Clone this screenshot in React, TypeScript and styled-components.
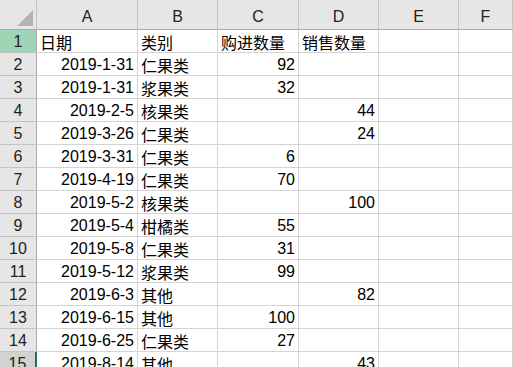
import React from 'react';
import styled, { createGlobalStyle } from 'styled-components';

const GlobalStyle = createGlobalStyle`
  html, body {
    margin: 0;
    padding: 0;
    background: #ffffff;
    overflow: hidden;
  }
`

const Sheet = styled.div`
  display: grid;
  grid-template-columns: 37px 101px 80px 81px 80px 80px 1fr;
  grid-auto-rows: 23px;
  grid-template-rows: 30px;
  width: 513px;
  height: 367px;
  overflow: hidden;
  font-family: "Liberation Sans", "Noto Sans CJK SC", sans-serif;
  font-size: 16px;
  color: #000;
`

const Corner = styled.div`
  background: #e6e6e6;
  border-right: 1px solid #c4c4c4;
  border-bottom: 1px solid #ababab;
  box-sizing: border-box;
  display: flex;
  align-items: flex-end;
  justify-content: flex-end;
  padding: 0 3px 3px 0;
`

const ColHead = styled.div`
  background: #e6e6e6;
  border-right: 1px solid #c4c4c4;
  border-bottom: 1px solid #ababab;
  box-sizing: border-box;
  display: flex;
  align-items: center;
  justify-content: center;
  color: #222;
  padding-top: 4px;
`

const RowHead = styled.div<{ $state?: 'sel' | 'active' }>`
  background: ${p => p.$state === 'sel' ? '#9fd5b7' : p.$state === 'active' ? '#d2d2d2' : '#e6e6e6'};
  border-right: ${p => p.$state === 'active' ? '2px solid #217346' : '1px solid #ababab'};
  border-bottom: 1px solid #c4c4c4;
  box-sizing: border-box;
  display: flex;
  align-items: center;
  justify-content: center;
  color: #222;
  padding-top: 2px;
`

const Cell = styled.div<{ $right?: boolean }>`
  border-right: 1px solid #d4d4d4;
  border-bottom: 1px solid #d4d4d4;
  box-sizing: border-box;
  display: flex;
  align-items: center;
  justify-content: ${p => p.$right ? 'flex-end' : 'flex-start'};
  padding: 2px 3px 0;
  white-space: nowrap;
  overflow: hidden;
`

const cols = ['A', 'B', 'C', 'D', 'E', 'F'];

const rows: [string, string, string, string][] = [
  ['2019-1-31', '仁果类', '92', ''],
  ['2019-1-31', '浆果类', '32', ''],
  ['2019-2-5', '核果类', '', '44'],
  ['2019-3-26', '仁果类', '', '24'],
  ['2019-3-31', '仁果类', '6', ''],
  ['2019-4-19', '仁果类', '70', ''],
  ['2019-5-2', '核果类', '', '100'],
  ['2019-5-4', '柑橘类', '55', ''],
  ['2019-5-8', '仁果类', '31', ''],
  ['2019-5-12', '浆果类', '99', ''],
  ['2019-6-3', '其他', '', '82'],
  ['2019-6-15', '其他', '100', ''],
  ['2019-6-25', '仁果类', '27', ''],
  ['2019-8-14', '其他', '', '43'],
];

export default function App() {
  return (
    <>
      <GlobalStyle />
      <Sheet>
        <Corner>
          <svg width="16" height="16" viewBox="0 0 16 16">
            <polygon points="16,0 16,16 0,16" fill="#b4b4b4" />
          </svg>
        </Corner>
        {cols.map(c => <ColHead key={c}>{c}</ColHead>)}

        <RowHead $state="sel">1</RowHead>
        <Cell>日期</Cell>
        <Cell>类别</Cell>
        <Cell>购进数量</Cell>
        <Cell>销售数量</Cell>
        <Cell />
        <Cell />

        {rows.map((r, i) => (
          <React.Fragment key={i}>
            <RowHead $state={i === 13 ? 'active' : undefined}>{i + 2}</RowHead>
            <Cell $right>{r[0]}</Cell>
            <Cell>{r[1]}</Cell>
            <Cell $right>{r[2]}</Cell>
            <Cell $right>{r[3]}</Cell>
            <Cell />
            <Cell />
          </React.Fragment>
        ))}
      </Sheet>
    </>
  );
}
